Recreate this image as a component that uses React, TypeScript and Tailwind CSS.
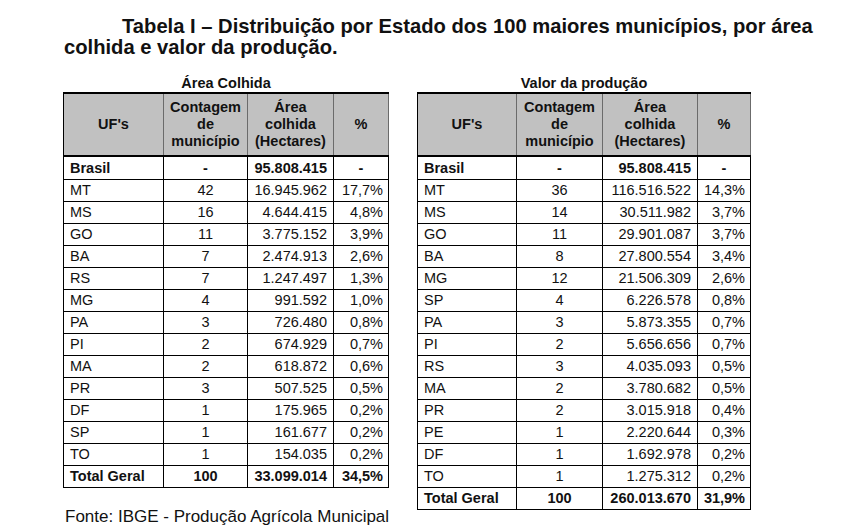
import React from "react";

type Row = [string, string, string, string];

const leftRows: Row[] = [
  ["Brasil", "-", "95.808.415", "-"],
  ["MT", "42", "16.945.962", "17,7%"],
  ["MS", "16", "4.644.415", "4,8%"],
  ["GO", "11", "3.775.152", "3,9%"],
  ["BA", "7", "2.474.913", "2,6%"],
  ["RS", "7", "1.247.497", "1,3%"],
  ["MG", "4", "991.592", "1,0%"],
  ["PA", "3", "726.480", "0,8%"],
  ["PI", "2", "674.929", "0,7%"],
  ["MA", "2", "618.872", "0,6%"],
  ["PR", "3", "507.525", "0,5%"],
  ["DF", "1", "175.965", "0,2%"],
  ["SP", "1", "161.677", "0,2%"],
  ["TO", "1", "154.035", "0,2%"],
  ["Total Geral", "100", "33.099.014", "34,5%"],
];

const rightRows: Row[] = [
  ["Brasil", "-", "95.808.415", "-"],
  ["MT", "36", "116.516.522", "14,3%"],
  ["MS", "14", "30.511.982", "3,7%"],
  ["GO", "11", "29.901.087", "3,7%"],
  ["BA", "8", "27.800.554", "3,4%"],
  ["MG", "12", "21.506.309", "2,6%"],
  ["SP", "4", "6.226.578", "0,8%"],
  ["PA", "3", "5.873.355", "0,7%"],
  ["PI", "2", "5.656.656", "0,7%"],
  ["RS", "3", "4.035.093", "0,5%"],
  ["MA", "2", "3.780.682", "0,5%"],
  ["PR", "2", "3.015.918", "0,4%"],
  ["PE", "1", "2.220.644", "0,3%"],
  ["DF", "1", "1.692.978", "0,2%"],
  ["TO", "1", "1.275.312", "0,2%"],
  ["Total Geral", "100", "260.013.670", "31,9%"],
];

function DataTable({
  rows,
  cols,
  label,
}: {
  rows: Row[];
  cols: string;
  label: string;
}) {
  return (
    <div className="flex flex-col">
      <div className="text-center font-bold text-[14.5px] leading-[17px]">{label}</div>
      <div className="border-t-2 border-l border-black">
        <div className={`grid ${cols} h-[63px] border-b-2 border-black bg-[#c1c1c1] font-bold text-[14.5px] leading-[17px] text-center`}>
          <div className="flex items-center justify-center border-r border-[#6b6b6b]">UF's</div>
          <div className="flex items-center justify-center border-r border-[#6b6b6b]">
            Contagem
            <br />
            de
            <br />
            município
          </div>
          <div className="flex items-center justify-center border-r border-[#6b6b6b]">
            Área
            <br />
            colhida
            <br />
            (Hectares)
          </div>
          <div className="flex items-center justify-center border-r border-[#6b6b6b]">%</div>
        </div>
        {rows.map((r, i) => {
          const bold = i === 0 || i === rows.length - 1;
          return (
            <div
              key={r[0]}
              className={`grid ${cols} ${i === 0 ? "h-[23px]" : "h-[22px]"} border-b border-black text-[14.5px] leading-[17px] ${bold ? "font-bold" : ""}`}
            >
              <div className="flex items-center pl-[6px] border-r border-black whitespace-nowrap">{r[0]}</div>
              <div className="flex items-center justify-center border-r border-black">{r[1]}</div>
              <div className="flex items-center justify-end pr-[6px] border-r border-black">{r[2]}</div>
              <div
                className={`flex items-center ${r[3] === "-" ? "justify-center" : "justify-end pr-[5px]"} border-r border-black`}
              >
                {r[3]}
              </div>
            </div>
          );
        })}
      </div>
    </div>
  );
}

export default function App() {
  return (
    <div
      className="w-[858px] h-[526px] overflow-hidden bg-white text-[#111]"
      style={{ fontFamily: '"Liberation Sans", Arial, sans-serif' }}
    >
      <div className="pl-[64px] pt-[16px] pr-4">
        <p className="font-bold text-[20.2px] leading-[21px] indent-[58px] whitespace-nowrap">
          Tabela I – Distribuição por Estado dos 100 maiores municípios, por área
          <br />
          colhida e valor da produção.
        </p>
      </div>
      <div className="flex items-start pl-[63px] mt-[17px] gap-[28px]">
        <div className="flex flex-col w-[326px]">
          <DataTable rows={leftRows} cols="grid-cols-[100px_84px_86px_55px]" label="Área Colhida" />
          <div className="mt-[19px] pl-[2px] text-[17px] leading-[20px] whitespace-nowrap">
            Fonte: IBGE - Produção Agrícola Municipal
          </div>
        </div>
        <div className="w-[334px]">
          <DataTable rows={rightRows} cols="grid-cols-[99px_86px_95px_53px]" label="Valor da produção" />
        </div>
      </div>
    </div>
  );
}
